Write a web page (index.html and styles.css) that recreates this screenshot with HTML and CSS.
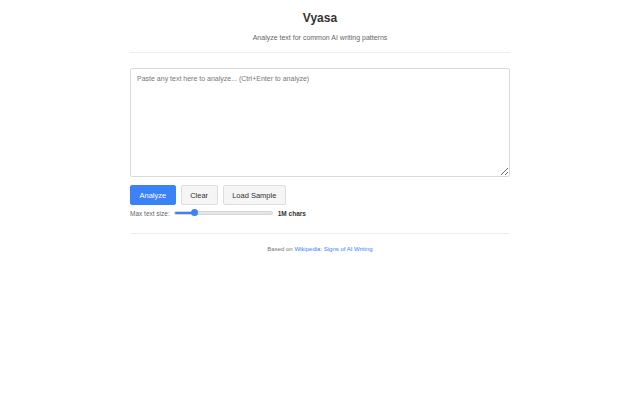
FILE: index.html
```html
<!DOCTYPE html>
<html>
<head>
<meta charset="utf-8">
<link rel="stylesheet" href="styles.css">
</head>
<body>
<div class="container">
  <header class="header">
    <h1 class="title">Vyasa</h1>
    <p class="subtitle">Analyze text for common AI writing patterns</p>
  </header>
  <main class="main">
    <textarea class="input" placeholder="Paste any text here to analyze... (Ctrl+Enter to analyze)"></textarea>
    <div class="actions">
      <button class="btn btn-primary">Analyze</button>
      <button class="btn">Clear</button>
      <button class="btn">Load Sample</button>
    </div>
    <div class="limit">
      <span class="limit-label">Max text size:</span>
      <div class="slider"><div class="slider-fill"></div><div class="slider-thumb"></div></div>
      <span class="limit-value">1M chars</span>
    </div>
  </main>
  <footer class="footer">
    Based on <a href="#" class="link">Wikipedia: Signs of AI Writing</a>
  </footer>
</div>
</body>
</html>
```
FILE: styles.css
```css
* { box-sizing: border-box; }
body {
  margin: 0;
  background: #fff;
  font-family: "Liberation Sans", Arial, sans-serif;
  color: #333;
}
.container {
  width: 380px;
  margin: 0 auto;
  padding-top: 11px;
}
.header {
  text-align: center;
  border-bottom: 1px solid #eee;
  padding-bottom: 10px;
}
.title {
  margin: 0;
  font-size: 12px;
  line-height: 15px;
  font-weight: bold;
  color: #333;
}
.subtitle {
  margin: 7px 0 0;
  font-size: 7px;
  line-height: 9px;
  color: #666;
}
.main {
  padding-top: 15px;
}
.input {
  display: block;
  width: 380px;
  height: 109px;
  margin: 0;
  padding: 5px 6px;
  border: 1px solid #dadada;
  border-radius: 2px;
  font-family: "Liberation Sans", Arial, sans-serif;
  font-size: 7px;
  line-height: 9px;
  resize: vertical;
}
.input::placeholder { color: #777; }
.actions {
  display: flex;
  gap: 5px;
  margin-top: 8px;
}
.btn {
  height: 20px;
  padding: 0 8.5px;
  border: 1px solid #ddd;
  border-radius: 2px;
  background: #f5f5f5;
  color: #333;
  font-family: "Liberation Sans", Arial, sans-serif;
  font-size: 7.5px;
}
.btn-primary {
  background: #3b82f6;
  border-color: #3b82f6;
  color: #fff;
}
.limit {
  display: flex;
  align-items: center;
  margin-top: 3px;
  height: 10px;
  font-size: 6.5px;
}
.limit-label { color: #666; }
.slider {
  position: relative;
  width: 99px;
  height: 4px;
  margin: 0 5px 0 4px;
  background: #e5e5e5;
  border: 1px solid #d6d6d6;
  border-radius: 2px;
}
.slider-fill {
  width: 20px;
  height: 100%;
  background: #3b82f6;
  border-radius: 2px;
}
.slider-thumb {
  position: absolute;
  left: 16px;
  top: -3px;
  width: 7px;
  height: 7px;
  border-radius: 50%;
  background: #3b82f6;
}
.limit-value { font-weight: bold; color: #333; }
.footer {
  margin-top: 15px;
  border-top: 1px solid #eee;
  padding-top: 12px;
  text-align: center;
  font-size: 6px;
  color: #777;
}
.link { color: #3b82f6; text-decoration: none; }
```
